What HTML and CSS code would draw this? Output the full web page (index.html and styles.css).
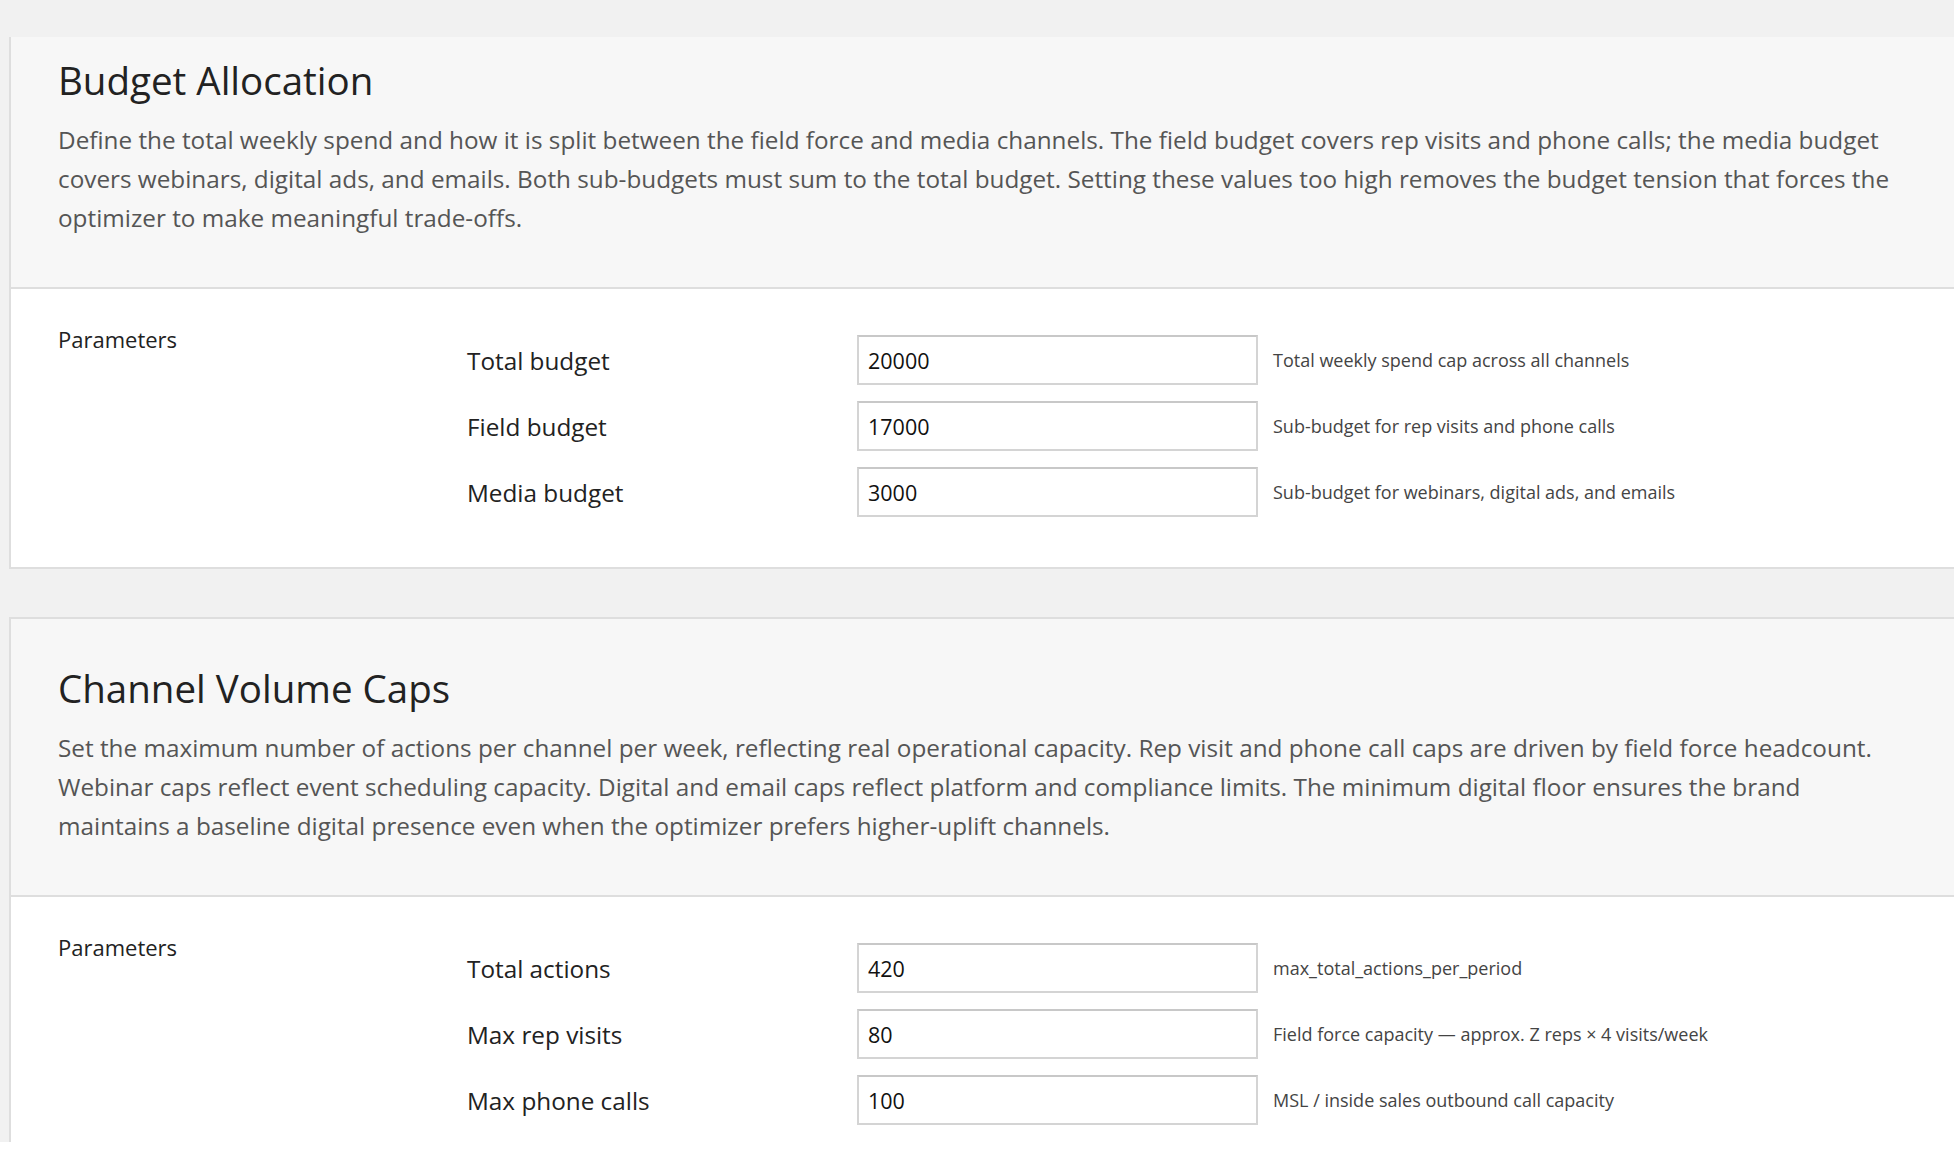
FILE: index.html
```html
<!DOCTYPE html>
<html>
<head>
    <title>Scenario Settings</title>
    <link rel="stylesheet" href="styles.css">
</head>
<body>
    <div class="topbar"></div>

    <section class="card">
        <div class="card-header">
            <h2>Budget Allocation</h2>
            <p>Define the total weekly spend and how it is split between the field force and media channels. The field budget covers rep visits and phone calls; the media budget covers webinars, digital ads, and emails. Both sub-budgets must sum to the total budget. Setting these values too high removes the budget tension that forces the optimizer to make meaningful trade-offs.</p>
        </div>
        <div class="card-body">
            <div class="section-label">Parameters</div>
            <div class="params">
                <label class="param-label" for="total_budget">Total budget</label>
                <input class="param-input" type="text" id="total_budget" value="20000">
                <span class="param-help">Total weekly spend cap across all channels</span>

                <label class="param-label" for="field_budget">Field budget</label>
                <input class="param-input" type="text" id="field_budget" value="17000">
                <span class="param-help">Sub-budget for rep visits and phone calls</span>

                <label class="param-label" for="media_budget">Media budget</label>
                <input class="param-input" type="text" id="media_budget" value="3000">
                <span class="param-help">Sub-budget for webinars, digital ads, and emails</span>
            </div>
        </div>
    </section>

    <section class="card">
        <div class="card-header">
            <h2>Channel Volume Caps</h2>
            <p>Set the maximum number of actions per channel per week, reflecting real operational capacity. Rep visit and phone call caps are driven by field force headcount. Webinar caps reflect event scheduling capacity. Digital and email caps reflect platform and compliance limits. The minimum digital floor ensures the brand maintains a baseline digital presence even when the optimizer prefers higher-uplift channels.</p>
        </div>
        <div class="card-body">
            <div class="section-label">Parameters</div>
            <div class="params">
                <label class="param-label" for="max_total_actions">Total actions</label>
                <input class="param-input" type="text" id="max_total_actions" value="420">
                <span class="param-help">max_total_actions_per_period</span>

                <label class="param-label" for="max_rep_visits">Max rep visits</label>
                <input class="param-input" type="text" id="max_rep_visits" value="80">
                <span class="param-help">Field force capacity — approx. Z reps × 4 visits/week</span>

                <label class="param-label" for="max_phone_calls">Max phone calls</label>
                <input class="param-input" type="text" id="max_phone_calls" value="100">
                <span class="param-help">MSL / inside sales outbound call capacity</span>
            </div>
        </div>
    </section>

    <div class="bottombar"></div>
</body>
</html>
```

FILE: styles.css
```css
body { margin: 0; padding: 9px 0 0 9px; background: #f1f1f1; font-family: "Open Sans", "Noto Sans", sans-serif; color: #222; overflow: hidden; }

/* strips that stay above the scrolled cards */
.topbar { position: fixed; top: 0; left: 0; right: 0; height: 37px; background: #f1f1f1; z-index: 10; }
.bottombar { position: fixed; bottom: 0; left: 0; right: 0; height: 22px; background: #fff; z-index: 10; }

.card { width: 1990px; margin-bottom: 48px; background: #fff; border: 2px solid #dedede; border-right: none; }
.card-header { background: #f7f7f7; border-bottom: 2px solid #dedede; padding: 45px 47px 50px; }
.card-header h2 { margin: 0 0 16px; font-size: 38.5px; line-height: 48px; font-weight: 400; color: #222; }
.card-header p { margin: 0; max-width: 1845px; font-size: 24.3px; line-height: 39px; color: #555; }

.card-body { display: grid; grid-template-columns: 409px auto; align-items: start; padding: 35px 47px 50px; }
.section-label { font-size: 22px; line-height: 30px; color: #222; }

.params { display: grid; grid-template-columns: 375px 401px auto; column-gap: 15px; row-gap: 16px; align-items: center; margin-top: 11px; }
.param-label { font-size: 24.3px; color: #222; }
.param-input { box-sizing: border-box; width: 401px; height: 50px; padding: 0 9px; border: 2px solid #d4d4d4; border-top-color: #c8c8c8; background: #fff; font-family: "Open Sans", "Noto Sans", sans-serif; font-size: 21.5px; color: #111; }
.param-help { font-size: 18px; color: #444; }
```
